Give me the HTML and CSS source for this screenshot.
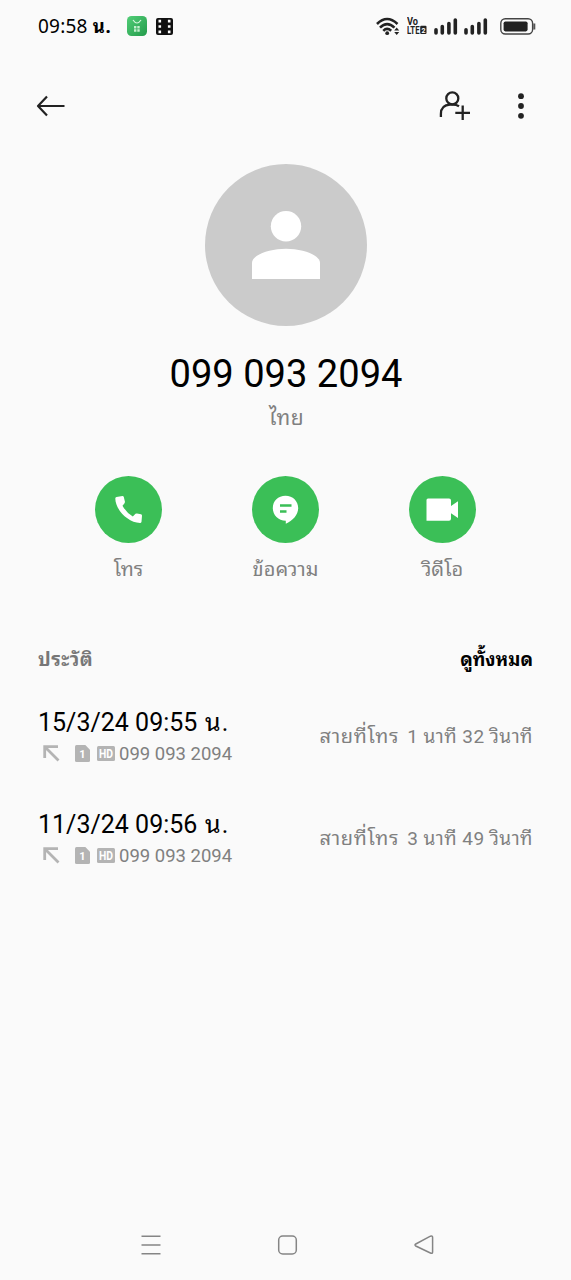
FILE: index.html
```html
<!DOCTYPE html>
<html lang="th">
<head>
<meta charset="utf-8">
<title>099 093 2094</title>
<link rel="stylesheet" href="styles.css">
</head>
<body>
<svg class="defs" width="0" height="0">
  <symbol id="missed" viewBox="0 0 17 17"><path d="M15.500 15.500 2.500 2.500M1.700 13V1.700H15" fill="none" stroke="#b4b4b4" stroke-width="2.800"/></symbol>
  <symbol id="signal" viewBox="0 0 24 17"><path d="M2 11.800v3.200M8.300 8.500v6.500M14.900 5.500v9.500M21.300 2v13" stroke="#222" stroke-width="3.600" stroke-linecap="round"/></symbol>
</svg>
<div class="screen">
  <header class="status">
    <span class="clock">09:58 <b>น.</b></span>
    <svg class="store" width="20" height="20" viewBox="0 0 20 20"><defs><linearGradient id="g" x2="1" y2="1"><stop stop-color="#52ce77"/><stop offset="1" stop-color="#239b4b"/></linearGradient></defs><rect width="20" height="20" rx="4.500" fill="url(#g)"/><path d="M6 4q4 6 8 0" fill="none" stroke="#d5f5dd" stroke-width="1.200"/><path d="M7 10h2.400v2.400H7zM10.300 10h2.400v2.400h-2.400zM7 13.300h2.400v2.400H7zM10.300 13.300h2.400v2.400h-2.400z" fill="#c5efcf"/></svg>
    <svg class="film" width="17" height="17" viewBox="0 0 17 17"><rect width="17" height="17" rx="2" fill="#111"/><path d="M2.500 1.800h2.600v2.600H2.500zM2.500 7.200h2.600v2.600H2.500zM2.500 12.600h2.600v2.600H2.500zM11.900 1.800h2.600v2.600h-2.600zM11.900 7.200h2.600v2.600h-2.600zM11.900 12.600h2.600v2.600h-2.600z" fill="#fff"/></svg>
    <svg class="wifi" width="24" height="19" viewBox="0 0 24 19"><g fill="none" stroke="#222" stroke-width="2.600"><path d="M1 7Q11 -3 21.500 7"/><path d="M4 10.600Q11 3.500 18.500 10.600"/><path d="M7.300 13.800Q11 10 15.200 13.800"/></g><circle cx="11.200" cy="16.200" r="1.900" fill="#222"/><path d="M18.200 13.500 20.700 10.500 23.200 13.500zM18.200 15h5l-2.500 3z" fill="#222"/></svg>
    <svg class="volte" width="20" height="22" viewBox="0 0 20 22"><text x="0" y="10" class="vo" textLength="11" lengthAdjust="spacingAndGlyphs">Vo</text><text x="0" y="18.800" class="lte" textLength="12.500" lengthAdjust="spacingAndGlyphs">LTE</text><rect x="13.200" y="10.800" width="6.300" height="8.200" rx="1" fill="#222"/><text x="14.500" y="17.500" class="two">2</text></svg>
    <svg class="sig1" width="24" height="17"><use href="#signal"/></svg>
    <svg class="sig2" width="24" height="17"><use href="#signal"/></svg>
    <svg class="battery" width="36" height="17" viewBox="0 0 36 17"><rect x=".8" y=".8" width="31.800" height="15.200" rx="4.500" fill="none" stroke="#444" stroke-width="1.400"/><rect x="3.600" y="3.400" width="24" height="10" rx="1.800" fill="#222"/><path d="M34.300 5.500v6" stroke="#555" stroke-width="2"/></svg>
  </header>

  <nav class="toolbar">
    <svg width="30" height="24" viewBox="0 0 30 24"><path d="M28.500 12H2M11 2.600 2 12l9 9.400" fill="none" stroke="#222" stroke-width="2.200" stroke-linejoin="round"/></svg>
    <svg class="add" width="32" height="30" viewBox="0 0 32 30"><g fill="none" stroke="#222" stroke-width="2.300"><circle cx="13.300" cy="7.400" r="6"/><path d="M1.900 26V23Q1.900 14 11 13.600H14Q17.500 13.600 20 15.200M16.300 21.800H31M23.700 14.500V29"/></g></svg>
    <svg width="8" height="28" viewBox="0 0 8 28"><g fill="#222"><circle cx="4" cy="4.200" r="2.900"/><circle cx="4" cy="14" r="2.900"/><circle cx="4" cy="23.800" r="2.900"/></g></svg>
  </nav>

  <section class="profile">
    <svg width="162" height="162" viewBox="0 0 162 162"><circle cx="81" cy="81" r="81" fill="#cbcbcb"/><circle cx="81" cy="62.300" r="15.200" fill="#fff"/><path d="M47 115V99C47 91 64 84.700 81 84.700S115 91 115 99v16z" fill="#fff"/></svg>
    <h1>099 093 2094</h1>
    <p>ไทย</p>
  </section>

  <section class="actions">
    <div class="action"><svg width="67" height="67" viewBox="0 0 67 67"><circle cx="33.500" cy="33.500" r="33.500" fill="#3bbf57"/><path d="M21.500 21 27.500 20Q28.500 20 28.800 21L30 26Q30 27 27.500 29.700Q31.500 37 37.800 40.400L40.500 37.800Q41 37.300 42 37.400L46 38.300Q47 38.600 47 39.700L46.500 45.800Q46.300 47 45 47C33 46.500 20.500 34 20.300 22.500Q20.300 21.300 21.500 21z" fill="#fff"/></svg><span>โทร</span></div>
    <div class="action"><svg width="67" height="67" viewBox="0 0 67 67"><circle cx="33.500" cy="33.500" r="33.500" fill="#3bbf57"/><path d="M33.500 19.700C40.900 19.700 46.200 25.200 46.200 32C46.200 39 40.500 44.800 33.800 47.800V44.700C26.300 44.700 20.800 39.200 20.800 32S26.100 19.700 33.500 19.700z" fill="#fff"/><path d="M28 29.500h11.500M28 35.500h6.500" stroke="#3bbf57" stroke-width="2.500"/></svg><span>ข้อความ</span></div>
    <div class="action"><svg width="67" height="67" viewBox="0 0 67 67"><circle cx="33.500" cy="33.500" r="33.500" fill="#3bbf57"/><path d="M19 22.500H40Q42 22.500 42 24.500V30L49 25.300V42L42 37.300V42.800Q42 44.800 40 44.800H17.500V24Q17.500 22.500 19 22.500z" fill="#fff"/></svg><span>วิดีโอ</span></div>
  </section>

  <section class="history">
    <div class="heading"><h2>ประวัติ</h2><b>ดูทั้งหมด</b></div>
    <article class="call">
      <div><div class="date">15/3/24 09:55 <span>น.</span></div>
        <div class="meta"><svg class="i-missed" width="17" height="17"><use href="#missed"/></svg>
          <svg class="i-sim" width="15" height="17" viewBox="0 0 15 17"><path d="M1.500 0h8.800L15 4.700v10.800q0 1.500-1.500 1.500h-12Q0 17 0 15.500v-14Q0 0 1.500 0z" fill="#b4b4b4"/><text x="7.500" y="12.500" class="sim-text">1</text></svg>
          <svg class="i-hd" width="18" height="15" viewBox="0 0 18 15"><rect width="18" height="15" rx="1.500" fill="#b4b4b4"/><text x="9" y="12" class="hd-text" textLength="14" lengthAdjust="spacingAndGlyphs">HD</text></svg>
          <span>099 093 2094</span></div></div>
      <div class="duration"><span class="kind">สายที่โทร</span><span>1 นาที 32 วินาที</span></div>
    </article>
    <article class="call">
      <div><div class="date">11/3/24 09:56 <span>น.</span></div>
        <div class="meta"><svg class="i-missed" width="17" height="17"><use href="#missed"/></svg>
          <svg class="i-sim" width="15" height="17" viewBox="0 0 15 17"><path d="M1.500 0h8.800L15 4.700v10.800q0 1.500-1.500 1.500h-12Q0 17 0 15.500v-14Q0 0 1.500 0z" fill="#b4b4b4"/><text x="7.500" y="12.500" class="sim-text">1</text></svg>
          <svg class="i-hd" width="18" height="15" viewBox="0 0 18 15"><rect width="18" height="15" rx="1.500" fill="#b4b4b4"/><text x="9" y="12" class="hd-text" textLength="14" lengthAdjust="spacingAndGlyphs">HD</text></svg>
          <span>099 093 2094</span></div></div>
      <div class="duration"><span class="kind">สายที่โทร</span><span>3 นาที 49 วินาที</span></div>
    </article>
  </section>

  <footer class="navbar">
    <svg width="22" height="22" viewBox="0 0 22 22"><path d="M1.500 2.200h19M1.500 11h19M1.500 19.700h19" stroke="#858585" stroke-width="1.500"/></svg>
    <svg width="22" height="22" viewBox="0 0 22 22"><rect x="1.700" y="2" width="17.600" height="18" rx="4" fill="none" stroke="#858585" stroke-width="1.500"/></svg>
    <svg width="22" height="22" viewBox="0 0 22 22"><path d="M2.800 10 17.400 2.200Q19.600 1.500 19.600 3.500V18Q19.600 20 17.400 19L2.800 12Q1.200 11 2.800 10z" fill="none" stroke="#858585" stroke-width="1.500"/></svg>
  </footer>
</div>
</body>
</html>
```
FILE: styles.css
```css
* { box-sizing: border-box; }
body { margin: 0; background: #fafafa; color: #000; font-family: Roboto, "Noto Sans Thai Looped", "Noto Looped Thai", "Droid Sans Thai", Loma, Garuda, Waree, Umpush, "Noto Sans Thai", "Noto Sans", sans-serif; }
svg { display: block; flex: none; }
.defs { position: absolute; }
.screen { width: 571px; height: 1280px; display: flex; flex-direction: column; overflow: hidden; }
h1, h2, p { margin: 0; font-weight: 400; }

.status { height: 52px; display: flex; align-items: center; padding: 0 35px 0 38px; }
.clock { width: 89px; font: 400 19px/24px "Noto Sans", "Noto Sans Thai Looped", Loma, Garuda, "Noto Sans Thai", sans-serif; letter-spacing: .2px; white-space: nowrap; }
.clock b { font-size: 18.500px; letter-spacing: .6px; }
.film { margin-left: 9px; }
.wifi { margin-left: auto; }
.volte { margin-left: 7px; }
.sig1 { margin-left: 7px; }
.sig2 { margin-left: 6px; }
.battery { margin-left: 12px; }
.vo, .lte, .two, .sim-text, .hd-text { font-family: Roboto, sans-serif; font-weight: 700; }
.vo, .lte { font-size: 10px; fill: #222; }
.two { font-size: 7px; fill: #fff; }
.sim-text { font-size: 11px; fill: #fff; text-anchor: middle; }
.hd-text { font-size: 12px; fill: #fff; text-anchor: middle; }

.toolbar { height: 108px; display: flex; align-items: center; padding: 0 46px 0 36px; }
.add { margin-left: auto; margin-right: 46px; }

.profile { height: 312px; padding-top: 3.500px; display: flex; flex-direction: column; align-items: center; }
.profile h1 { margin-top: 24.500px; padding-left: 1px; font-size: 38.100px; line-height: 48px; }
.profile p { margin-top: 6px; padding-left: 2px; font-size: 21px; line-height: 28px; letter-spacing: .5px; color: #808080; }

.actions { height: 168px; padding: 4px 50px 0; display: grid; grid-template-columns: repeat(3, 157px); }
.action { display: flex; flex-direction: column; align-items: center; }
.action span { margin-top: 12px; font-size: 20px; line-height: 28px; color: #808080; white-space: nowrap; }

.history { padding: 0 38px; }
.heading { height: 40px; display: flex; align-items: center; justify-content: space-between; font-size: 18.500px; line-height: 28px; }
.heading h2 { font-size: 19px; letter-spacing: .5px; font-weight: 700; color: #777; }
.call { height: 102px; padding-top: 27px; display: flex; justify-content: space-between; }
.date { font-size: 25px; line-height: 31px; white-space: nowrap; }
.date span { padding-left: 1.500px; letter-spacing: 1px; }
.meta { height: 31px; display: flex; align-items: center; padding-left: 5px; font-size: 18.500px; color: #808080; }
.i-sim { margin-left: 15px; }
.i-hd { margin-left: 7px; }
.meta span { margin-left: 4px; white-space: nowrap; }
.duration { padding-top: 16px; display: flex; align-items: baseline; gap: 8px; font-size: 19px; line-height: 26px; letter-spacing: .45px; color: #808080; white-space: nowrap; }
.kind { font-size: 20px; letter-spacing: .7px; }

.navbar { height: 70px; margin-top: auto; padding: 0 136px 0 140px; display: flex; align-items: center; justify-content: space-between; }
```
